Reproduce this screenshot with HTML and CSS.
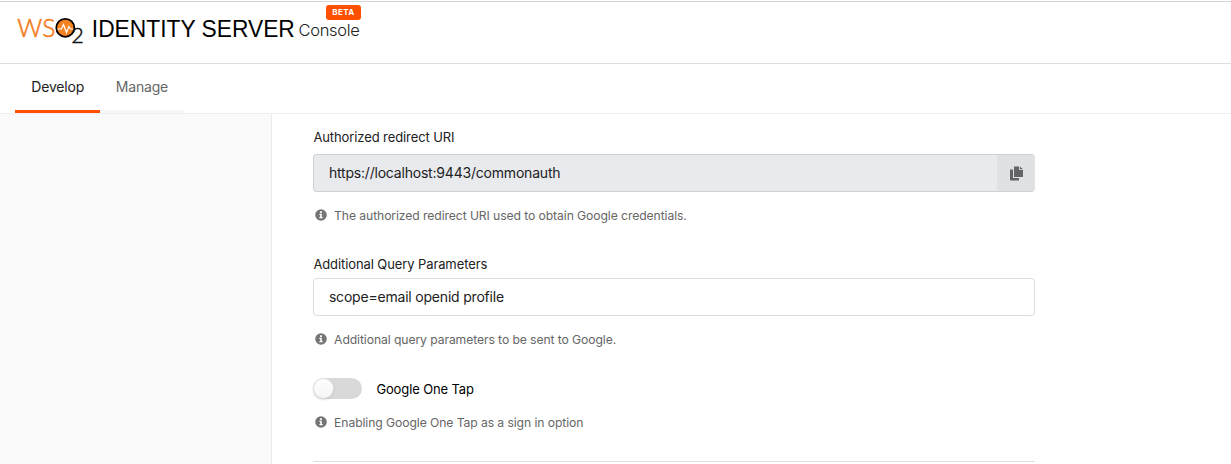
FILE: index.html
```html
<!DOCTYPE html>
<html lang="en">
<head>
<meta charset="utf-8">
<title>WSO2 Identity Server Console</title>
<link rel="stylesheet" href="styles.css">
</head>
<body>
<svg class="sprite" width="0" height="0" aria-hidden="true">
  <symbol id="info" viewBox="0 0 12 12">
    <circle cx="6" cy="6" r="5.8" fill="#757575"/>
    <path d="M5.1 2.3h1.8v1.6H5.1zM4.4 4.8h2.4v3.3h.8v1.1H4.4V8.100h.8V5.900h-.8z" fill="#fff"/>
  </symbol>
</svg>
<header class="header">
  <div class="brand">
    <svg class="logo" width="280" height="34" viewBox="0 0 280 34">
      <text class="logo-ws" x="0.300" y="23.800" textLength="38" lengthAdjust="spacingAndGlyphs">WS</text>
      <circle cx="48.300" cy="14.800" r="9" fill="#f58220" stroke="#000" stroke-width="1.800"/>
      <path d="M40.500 16h4l2-4.500 3 8 2.400-6 1.500 2.500h3" fill="none" stroke="#fff" stroke-width="1.200"/>
      <text class="logo-two" x="54.300" y="29.600" textLength="12.500" lengthAdjust="spacingAndGlyphs">2</text>
      <text class="logo-name" x="74.800" y="23.600" textLength="203" lengthAdjust="spacingAndGlyphs">IDENTITY SERVER</text>
    </svg>
    <span class="product">Console<span class="beta">BETA</span></span>
  </div>
</header>
<nav class="tabs">
  <a class="tab active">Develop</a>
  <a class="tab">Manage</a>
</nav>
<div class="layout">
  <aside class="sidebar"></aside>
  <main class="content">
    <div class="field">
      <label class="label">Authorized redirect URI</label>
      <div class="input readonly">
        <span class="value">https://localhost:9443/commonauth</span>
        <span class="copy">
          <svg width="13" height="15" viewBox="0 0 13 15"><path d="M0 3.500h3V12h6v2.500H.6L0 14z" fill="#636466"/><path d="M4 .5h5v3.500h4V11H4z" fill="#636466"/><path d="M9.800.5 13 3.300H9.800z" fill="#636466"/></svg>
        </span>
      </div>
      <p class="hint"><svg width="12" height="12"><use href="#info"/></svg><span>The authorized redirect URI used to obtain Google credentials.</span></p>
    </div>
    <div class="field second">
      <label class="label">Additional Query Parameters</label>
      <div class="input"><span class="value">scope=email openid profile</span></div>
      <p class="hint"><svg width="12" height="12"><use href="#info"/></svg><span>Additional query parameters to be sent to Google.</span></p>
    </div>
    <div class="field third">
      <div class="toggle-row"><span class="toggle"><span class="knob"></span></span><span class="toggle-label">Google One Tap</span></div>
      <p class="hint"><svg width="12" height="12"><use href="#info"/></svg><span>Enabling Google One Tap as a sign in option</span></p>
    </div>
    <hr class="divider">
  </main>
</div>
</body>
</html>
```
FILE: styles.css
```css
* { box-sizing: border-box; }
body { margin: 0; height: 464px; overflow: hidden; background: #fff; color: #212121; font-family: Inter, "Liberation Sans", sans-serif; display: flex; flex-direction: column; }
.sprite { position: absolute; }
.header { flex: none; margin-top: 1px; height: 63px; border-top: 1px solid #d4d5d5; border-bottom: 1px solid #dcdddd; padding: 11px 0 0 17px; }
.brand { display: flex; }
.logo { display: block; flex: none; overflow: visible; }
.logo-ws { font: 300 26px Lato, sans-serif; fill: #f47b20; stroke: #f47b20; stroke-width: .6px; }
.logo-two { font: 300 21px Lato, sans-serif; fill: #111; stroke: #111; stroke-width: .5px; }
.logo-name { font: 23px "Liberation Sans", sans-serif; fill: #000; }
.product { position: relative; margin-left: 1.500px; padding-top: 6px; font-size: 16.500px; line-height: 22px; font-weight: 300; letter-spacing: -.3px; }
.beta { position: absolute; left: 27.500px; top: -8px; width: 35px; height: 15px; border-radius: 3px; background: #ff5000; color: #fff; font-size: 8px; line-height: 14px; font-weight: 700; text-align: center; letter-spacing: .4px; }
.tabs { display: flex; flex: none; height: 50px; padding-left: 15px; border-bottom: 1px solid #eee; }
.tab { width: 84.500px; height: 49px; padding-left: 16.300px; font-size: 14px; line-height: 46px; letter-spacing: -.2px; color: #666; border-bottom: 3px solid #f7f7f7; white-space: nowrap; }
.tab.active { color: #212121; border-color: #ff5000; }
.layout { display: flex; flex: 1; min-height: 0; }
.sidebar { width: 272px; flex: none; background: #fafafa; border-right: 1px solid #ebebeb; }
.content { width: 763px; padding: 13px 0 0 41.400px; }
.label { display: block; width: max-content; height: 20px; font-size: 13px; line-height: 20px; letter-spacing: -.1px; margin-bottom: 7px; }
.input { display: flex; align-items: center; height: 38px; border: 1px solid #dcdddd; border-radius: 4px; padding-left: 14.500px; overflow: hidden; }
.readonly { background: #e9eaee; border-color: #ced1d4; border-right: 0; }
.value { padding-bottom: 2px; font-size: 14px; letter-spacing: -.2px; white-space: nowrap; }
.copy { display: flex; align-items: center; justify-content: center; width: 38px; height: 38px; margin-left: auto; background: #e0e1e2; flex: none; }
.hint { display: flex; align-items: center; height: 20px; margin: 13px 0 0 1.200px; font-size: 12.200px; letter-spacing: -.1px; color: #666; white-space: nowrap; gap: 7.500px; }
.hint svg { flex: none; }
.second { margin-top: 29px; }
.second .label { margin-bottom: 4px; }
.third { margin-top: 29px; }
.toggle-row { display: flex; align-items: center; height: 21px; gap: 14px; }
.toggle { display: flex; width: 49px; height: 21px; border-radius: 11px; background: #d9d9d9; }
.knob { width: 21px; height: 21px; border-radius: 50%; background: linear-gradient(#fff, #f4f4f4); box-shadow: 0 1px 2px rgba(34,36,38,.15), inset 0 0 0 1px rgba(34,36,38,.12); }
.toggle-label { font-size: 13px; letter-spacing: -.13px; color: #000; white-space: nowrap; }
.divider { margin: 29px 0 0; border: 0; height: 1px; background: #dcdddd; }
```
